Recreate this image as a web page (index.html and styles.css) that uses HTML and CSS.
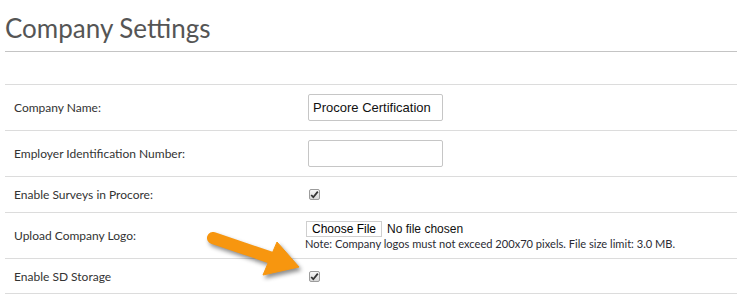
FILE: index.html
```html
<!DOCTYPE html>
<html>
<head>
    <meta charset="UTF-8">
    <title>Company Settings</title>
    <link rel="stylesheet" href="styles.css">
</head>
<body>
    <div class="page">
        <h1 class="page-title">Company Settings</h1>
        <div class="settings">
            <table class="settings-table">
                <tr>
                    <td class="label">Company Name:</td>
                    <td class="value"><input type="text" class="text-input" value="Procore Certification"></td>
                </tr>
                <tr>
                    <td class="label">Employer Identification Number:</td>
                    <td class="value"><input type="text" class="text-input" value=""></td>
                </tr>
                <tr class="short">
                    <td class="label">Enable Surveys in Procore:</td>
                    <td class="value">
                        <span class="checkbox">
                            <svg width="9" height="9" viewBox="0 0 9 9"><path d="M1.2 5 L3.3 7.2 L7.8 1.6" fill="none" stroke="#333" stroke-width="1.8"/></svg>
                        </span>
                    </td>
                </tr>
                <tr>
                    <td class="label">Upload Company Logo:</td>
                    <td class="value">
                        <input type="file" class="file-input">
                        <div class="note">Note: Company logos must not exceed 200x70 pixels. File size limit: 3.0 MB.</div>
                    </td>
                </tr>
                <tr class="short last">
                    <td class="label">Enable SD Storage</td>
                    <td class="value">
                        <span class="checkbox">
                            <svg width="9" height="9" viewBox="0 0 9 9"><path d="M1.2 5 L3.3 7.2 L7.8 1.6" fill="none" stroke="#333" stroke-width="1.8"/></svg>
                        </span>
                    </td>
                </tr>
            </table>
            <!-- callout arrow pointing at the SD storage checkbox -->
            <svg class="arrow" width="110" height="64" viewBox="0 0 110 64">
                <line x1="13" y1="13" x2="72" y2="33" stroke="#f7960f" stroke-width="12" stroke-linecap="round"/>
                <polygon points="77,17 99,42 63,50" fill="#f7960f" stroke="#f7960f" stroke-width="1" stroke-linejoin="round"/>
            </svg>
        </div>
    </div>
</body>
</html>
```

FILE: styles.css
```css
body {
    margin: 0;
    font-family: Lato, "Liberation Sans", sans-serif;
    color: #333;
    background: #fff;
}
.page {
    padding-left: 5px;
}
.page-title {
    margin: 13px 0 0 0;
    padding-bottom: 7px;
    font-size: 26px;
    line-height: 31px;
    font-weight: 400;
    color: #555;
    border-bottom: 1px solid #c4c4c4;
}
.settings {
    position: relative;
    margin-top: 32px;
}
.settings-table {
    width: 100%;
    border-collapse: collapse;
    border-top: 1px solid #dcdcdc;
}
.settings-table tr {
    border-bottom: 1px solid #dcdcdc;
}
.settings-table td {
    height: 45px;
    padding: 0;
    vertical-align: middle;
}
.settings-table tr.short td {
    height: 35px;
}
.settings-table tr.last td {
    height: 34px;
}
.label {
    width: 291px;
    padding-left: 9px !important;
    font-size: 12px;
    color: #333;
}
.text-input {
    box-sizing: border-box;
    width: 135px;
    height: 27px;
    margin: 0 0 0 3px;
    padding: 0 4px;
    border: 1px solid #c6c6c6;
    border-radius: 2px;
    font-family: "Liberation Sans", sans-serif;
    font-size: 13px;
    color: #111;
    display: block;
}
.checkbox {
    box-sizing: border-box;
    display: flex;
    align-items: center;
    justify-content: center;
    width: 11px;
    height: 11px;
    margin-left: 4px;
    border: 1px solid #9c9c9c;
    border-radius: 2px;
    background: linear-gradient(#f6f6f6, #d8d8d8);
}
.file-input {
    display: block;
    margin-left: 1px;
    font-family: "Liberation Sans", sans-serif;
    font-size: 12px;
    color: #111;
}
.file-input::file-selector-button {
    height: 16px;
    margin-right: 5px;
    padding: 0 5px;
    border: 1px solid #cfcfcf;
    border-radius: 0;
    background: #fff;
    font-family: "Liberation Sans", sans-serif;
    font-size: 12px;
    color: #000;
}
.note {
    font-size: 11.1px;
    line-height: 14px;
    color: #2b2b33;
}
.arrow {
    position: absolute;
    left: 195px;
    top: 141px;
    filter: drop-shadow(2px 3px 2px rgba(0, 0, 0, 0.45));
}
```
